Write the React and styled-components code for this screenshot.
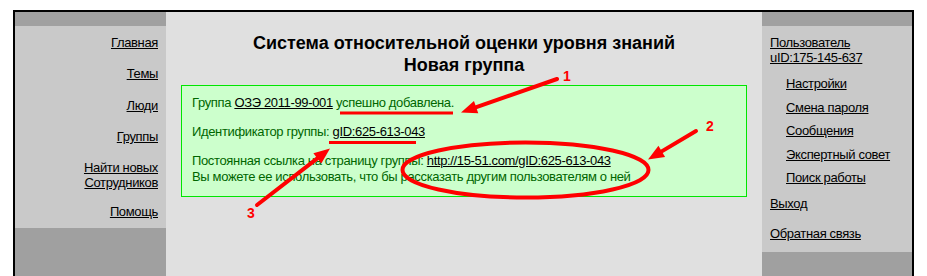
import React from "react";
import styled, { createGlobalStyle } from "styled-components";

const GlobalStyle = createGlobalStyle`
  html, body {
    margin: 0;
    padding: 0;
    background: #ffffff;
  }
  body {
    font-family: "Liberation Sans", Arial, sans-serif;
    font-size: 13px;
    letter-spacing: -0.35px;
    color: #000;
  }
`;

const Page = styled.div`
  position: relative;
  width: 927px;
  height: 276px;
  overflow: hidden;
  box-sizing: border-box;
  padding: 10px 13px 0;
`;

const Frame = styled.div`
  display: grid;
  grid-template-columns: 151px 596px 150px;
  min-height: 320px;
  border: 2px solid #000;
  border-bottom: none;
`;

const Sidebar = styled.div`
  background: #a0a0a0;
  padding-top: 14px;
`;

const NavBox = styled.nav`
  background: #c9c9c9;
  display: flex;
  flex-direction: column;
  align-items: ${({ $right }) => ($right ? "flex-end" : "flex-start")};
  text-align: ${({ $right }) => ($right ? "right" : "left")};
  padding: ${({ $right }) => ($right ? "9px 8px 8px 0" : "9px 0 10px 8px")};
`;

const NavLink = styled.a`
  display: block;
  color: #000;
  text-decoration: underline;
  line-height: ${({ $tight }) => ($tight ? "15px" : "16px")};
  margin-top: ${({ $gap }) => $gap || 0}px;
  margin-left: ${({ $indent }) => ($indent ? "16px" : "0")};
  cursor: pointer;
`;

const Main = styled.main`
  background: #e0e0e0;
  padding: 21px 15px 0 15px;
`;

const Title = styled.h1`
  margin: 0;
  font-size: 18px;
  line-height: 21.5px;
  letter-spacing: 0;
  font-weight: bold;
  text-align: center;
`;

const Notice = styled.div`
  margin-top: 9px;
  background: #ccffcc;
  border: 1px solid #00e600;
  padding: 9px 10px 11px;
  color: #006600;
  line-height: 16px;
`;

const Para = styled.p`
  margin: 0 0 13px;
  &:last-child {
    margin-bottom: 0;
  }
`;

const TextLink = styled.a`
  color: #000;
  text-decoration: underline;
`;

const Overlay = styled.svg`
  position: absolute;
  left: 0;
  top: 0;
  pointer-events: none;
`;

const Label = styled.text`
  font-family: "Liberation Sans", Arial, sans-serif;
  font-size: 14px;
  font-weight: bold;
  letter-spacing: 0;
  fill: #ff0000;
`;

const RED = "#ff0000";

// arrow head computed from the two end points
const Arrow = ({ x1, y1, x2, y2 }) => {
  const dx = x2 - x1;
  const dy = y2 - y1;
  const len = Math.hypot(dx, dy);
  const ux = dx / len;
  const uy = dy / len;
  const bx = x2 - ux * 16;
  const by = y2 - uy * 16;
  const nx = -uy * 6.5;
  const ny = ux * 6.5;
  return (
    <g>
      <line
        x1={x1}
        y1={y1}
        x2={bx + ux * 2}
        y2={by + uy * 2}
        stroke={RED}
        strokeWidth="4"
        strokeLinecap="round"
      />
      <polygon
        points={`${x2},${y2} ${bx + nx},${by + ny} ${bx - nx},${by - ny}`}
        fill={RED}
      />
    </g>
  );
};

const Annotations = () => (
  <Overlay width="927" height="276" viewBox="0 0 927 276">
    <line x1="340" y1="113" x2="453" y2="113" stroke={RED} strokeWidth="3" />
    <line x1="329" y1="142.5" x2="416" y2="142.5" stroke={RED} strokeWidth="3" />
    <ellipse
      cx="525.5"
      cy="170"
      rx="123"
      ry="27.5"
      fill="none"
      stroke={RED}
      strokeWidth="4"
    />
    <Arrow x1={557} y1={79} x2={461} y2={112.5} />
    <Arrow x1={696} y1={131} x2={648} y2={159.5} />
    <Arrow x1={257} y1={205} x2={330} y2={148.5} />
    <Label x="567" y="81" textAnchor="middle">1</Label>
    <Label x="710" y="131" textAnchor="middle">2</Label>
    <Label x="251" y="218" textAnchor="middle">3</Label>
  </Overlay>
);

export default function App() {
  return (
    <>
      <GlobalStyle />
      <Page>
        <Frame>
          <Sidebar>
            <NavBox $right>
              <NavLink>Главная</NavLink>
              <NavLink $gap={15}>Темы</NavLink>
              <NavLink $gap={16}>Люди</NavLink>
              <NavLink $gap={15}>Группы</NavLink>
              <NavLink $gap={15} $tight>
                Найти новых
                <br />
                Сотрудников
              </NavLink>
              <NavLink $gap={14}>Помощь</NavLink>
            </NavBox>
          </Sidebar>

          <Main>
            <Title>
              Система относительной оценки уровня знаний
              <br />
              Новая группа
            </Title>
            <Notice>
              <Para>
                Группа <TextLink>ОЗЭ 2011-99-001</TextLink> успешно добавлена.
              </Para>
              <Para>
                Идентификатор группы: <TextLink>gID:625-613-043</TextLink>
              </Para>
              <Para>
                Постоянная ссылка на страницу группы:{" "}
                <TextLink>http://15-51.com/gID:625-613-043</TextLink>
                <br />
                Вы можете ее использовать, что бы рассказать другим
                пользователям о ней
              </Para>
            </Notice>
          </Main>

          <Sidebar>
            <NavBox>
              <NavLink $tight>
                Пользователь
                <br />
                uID:175-145-637
              </NavLink>
              <NavLink $gap={11} $indent>Настройки</NavLink>
              <NavLink $gap={7.5} $indent>Смена пароля</NavLink>
              <NavLink $gap={7} $indent>Сообщения</NavLink>
              <NavLink $gap={8} $indent>Экспертный совет</NavLink>
              <NavLink $gap={7} $indent>Поиск работы</NavLink>
              <NavLink $gap={10}>Выход</NavLink>
              <NavLink $gap={14}>Обратная связь</NavLink>
            </NavBox>
          </Sidebar>
        </Frame>
        <Annotations />
      </Page>
    </>
  );
}
